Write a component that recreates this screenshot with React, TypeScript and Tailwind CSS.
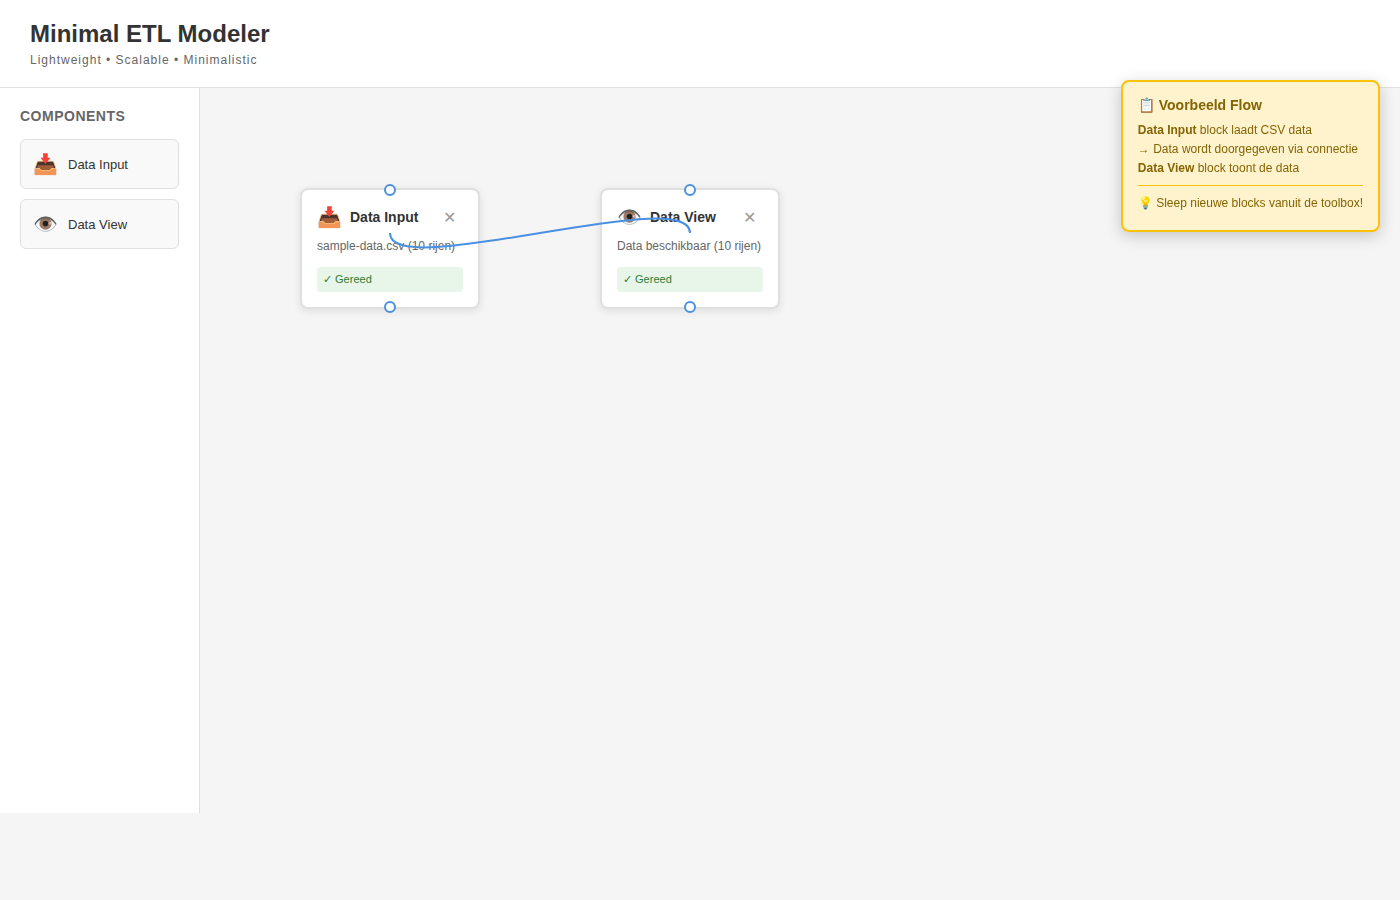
import React from "react";

type BlockProps = {
  icon: string;
  title: string;
  description: string;
  place: string;
};

const tools = [
  { icon: "📥", label: "Data Input" },
  { icon: "👁️", label: "Data View" },
];

function Port({ edge }: { edge: string }) {
  return (
    <span
      className={`absolute left-1/2 size-3 -translate-x-1/2 rounded-full border-2 border-[#4a90e2] bg-white ${edge}`}
    />
  );
}

function Block({ icon, title, description, place }: BlockProps) {
  return (
    <article
      className={`absolute top-[100px] w-[180px] rounded-lg border-2 border-[#e0e0e0] bg-white p-[15px] shadow-[0_2px_8px_rgba(0,0,0,0.1)] ${place}`}
    >
      <Port edge="-top-[6px]" />
      <div className="mb-2 flex h-6 items-center gap-2">
        <span className="text-[20px] leading-6">{icon}</span>
        <h3 className="flex-1 text-[14px] leading-4 font-semibold">{title}</h3>
        <button
          type="button"
          aria-label={`Remove ${title}`}
          className="px-[7px] text-[16px] leading-[19px] text-[#999]"
        >
          ✕
        </button>
      </div>
      <p className="text-[12px] leading-[18px] whitespace-nowrap text-[#666]">{description}</p>
      <p className="mt-3 rounded-[4px] bg-[#e8f5e9] px-[6px] py-[6px] text-[11px] leading-[13px] text-[#2e7d32]">
        ✓ Gereed
      </p>
      <Port edge="-bottom-[6px]" />
    </article>
  );
}

export default function App() {
  return (
    <div className="flex min-h-screen flex-col bg-[#f5f5f5] font-['Liberation_Sans',Arial,sans-serif] text-[#333]">
      <header className="border-b border-[#e0e0e0] bg-white px-[30px] py-5">
        <h1 className="text-[24px] leading-7 font-semibold">Minimal ETL Modeler</h1>
        <p className="mt-[5px] text-[12px] leading-[14px] tracking-[1px] text-[#666]">
          Lightweight • Scalable • Minimalistic
        </p>
      </header>

      <div className="mb-[87px] flex flex-1">
        <aside className="w-[200px] shrink-0 border-r border-[#e0e0e0] bg-white p-5">
          <h2 className="mb-[15px] text-[14px] leading-4 font-semibold tracking-[0.5px] text-[#666] uppercase">
            Components
          </h2>
          <ul className="flex flex-col gap-[10px]">
            {tools.map((tool) => (
              <li
                key={tool.label}
                draggable
                className="flex h-[50px] cursor-grab items-center gap-[10px] rounded-md border border-[#e0e0e0] bg-[#f9f9f9] px-3"
              >
                <span className="text-[20px] leading-6">{tool.icon}</span>
                <span className="text-[13px] leading-[15px]">{tool.label}</span>
              </li>
            ))}
          </ul>
        </aside>

        <main className="relative flex-1">
          <Block
            icon="📥"
            title="Data Input"
            description="sample-data.csv (10 rijen)"
            place="left-[100px]"
          />
          <Block
            icon="👁️"
            title="Data View"
            description="Data beschikbaar (10 rijen)"
            place="left-[400px]"
          />
          <svg
            className="pointer-events-none absolute inset-0 size-full"
            fill="none"
            stroke="#4a90e2"
            strokeWidth="2"
            aria-hidden="true"
          >
            <path d="M190 145 C190 195 490 95 490 145" />
          </svg>
        </main>
      </div>

      <aside className="fixed top-20 right-5 rounded-lg border-2 border-[#ffc107] bg-[#fff3cd] px-[15px] pt-[15px] pb-[17px] text-[12px] leading-[19px] text-[#856404] shadow-[0_4px_16px_rgba(0,0,0,0.2)]">
        <h2 className="mb-2 text-[14px] leading-4 font-semibold">📋 Voorbeeld Flow</h2>
        <p>
          <strong>Data Input</strong> block laadt CSV data
        </p>
        <p>→ Data wordt doorgegeven via connectie</p>
        <p>
          <strong>Data View</strong> block toont de data
        </p>
        <p className="mt-[7px] border-t border-[#ffc107] pt-2">
          💡 Sleep nieuwe blocks vanuit de toolbox!
        </p>
      </aside>
    </div>
  );
}
